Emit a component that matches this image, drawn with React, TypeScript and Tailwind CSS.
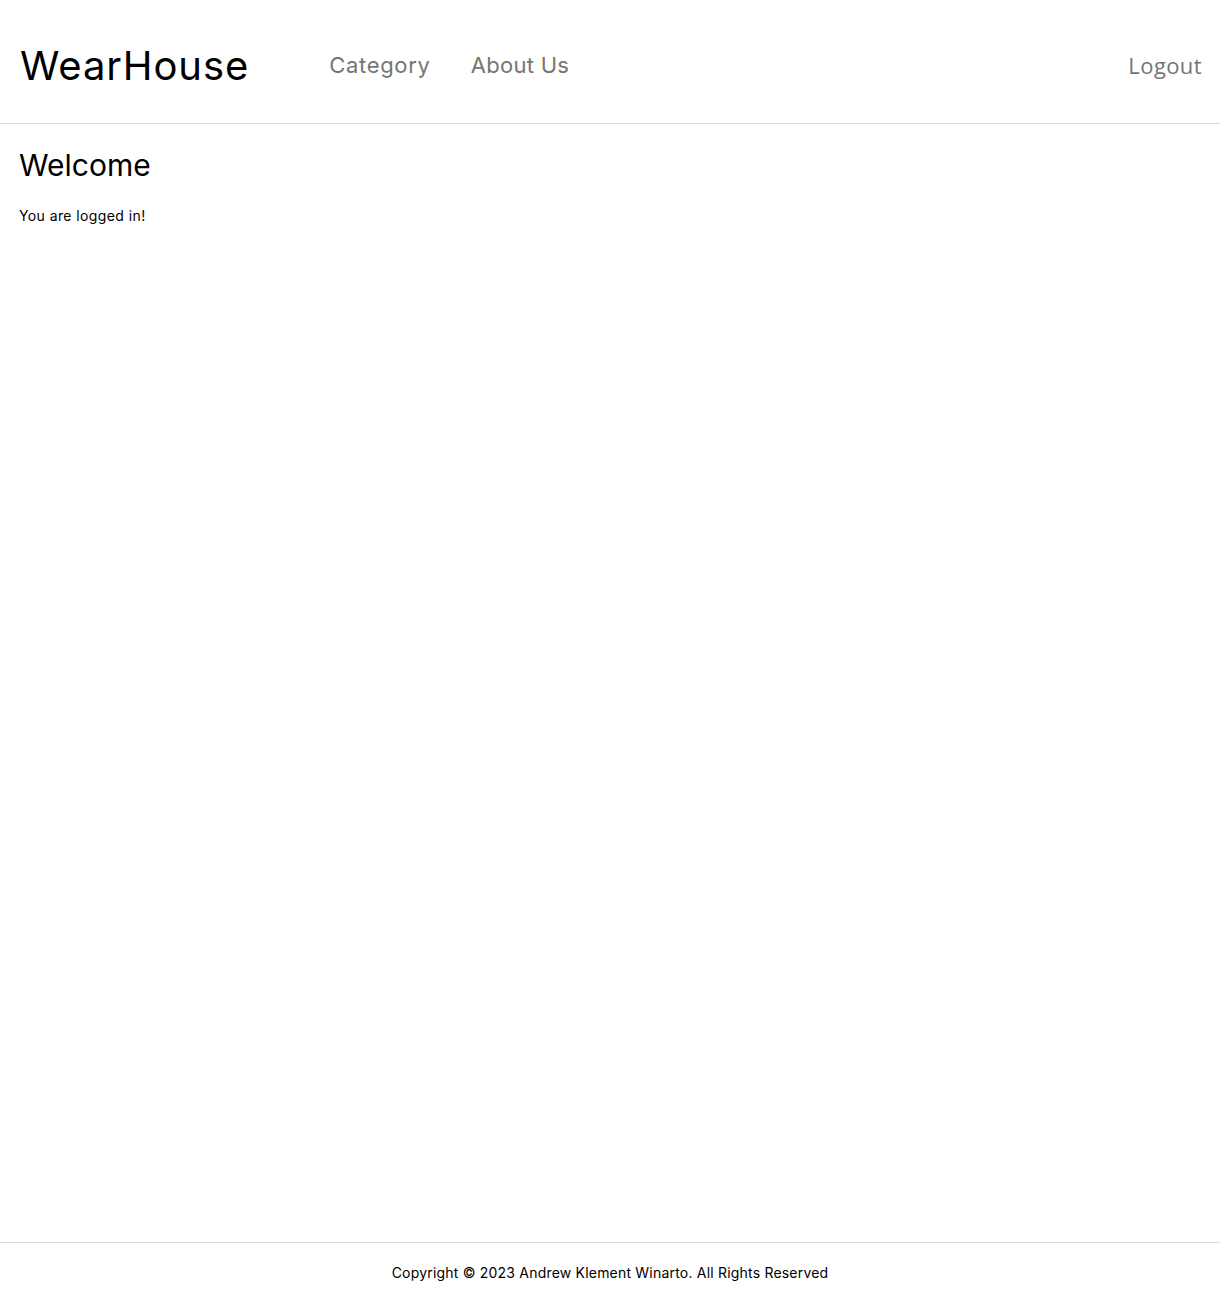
const App = () => {
  return (
    <div className="min-h-screen flex flex-col bg-white text-black font-['Inter',sans-serif]">
      {/* Navbar */}
      <header className="h-[124px] border-b border-[#d9d9d9] flex items-center pl-5 pr-[18px] pt-2">
        <a href="#" className="text-[40px] font-normal leading-none tracking-[0.9px] text-black">
          WearHouse
        </a>
        <nav className="flex items-center gap-[40px] ml-[80px]">
          <a href="#" className="text-[22px] tracking-[0.7px] text-[#757575]">
            Category
          </a>
          <a href="#" className="text-[22px] tracking-[0.3px] text-[#757575]">
            About Us
          </a>
        </nav>
        <a href="#" className="ml-auto text-[22px] tracking-[0.4px] text-[#757575] font-['Open_Sans',sans-serif]">
          Logout
        </a>
      </header>

      {/* Content */}
      <main className="flex-1 pl-[19px] pr-5 pt-[23px]">
        <h1 className="text-[30px] leading-9 font-normal">Welcome</h1>
        <p className="mt-[22px] text-[14px] tracking-[0.4px]">You are logged in!</p>
      </main>

      {/* Footer */}
      <footer className="h-[51px] border-t border-[#d9d9d9] flex items-center justify-center pt-2">
        <p className="text-[14px] tracking-[0.2px] text-black">
          Copyright © 2023 Andrew Klement Winarto. All Rights Reserved
        </p>
      </footer>
    </div>
  );
};

export default App;
